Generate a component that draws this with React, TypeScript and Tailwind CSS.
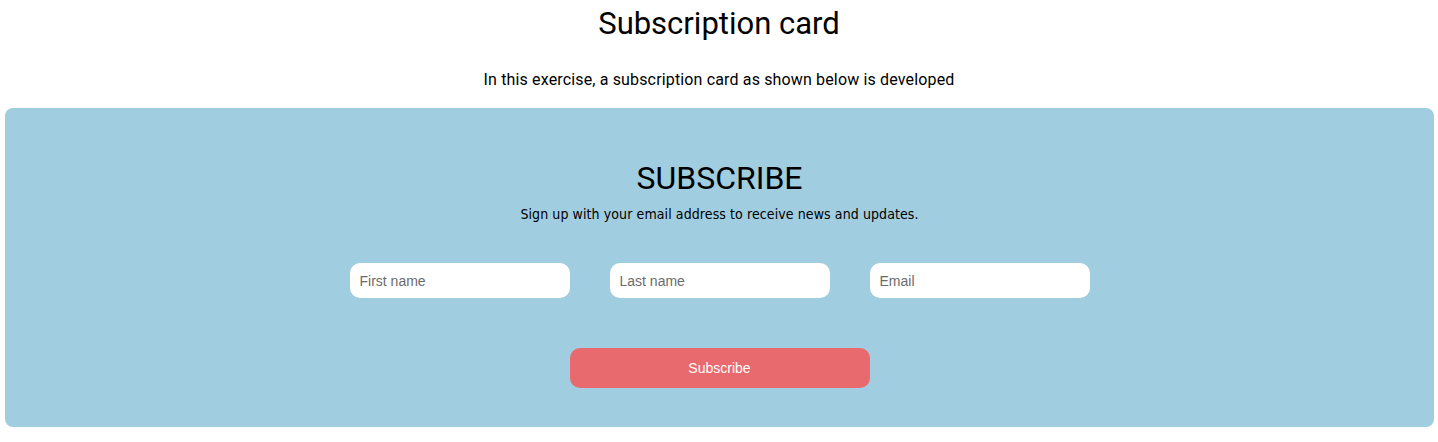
export default function App() {
  return (
    <div className="bg-white text-black font-['Roboto','Helvetica_Neue',Arial,sans-serif]">
      <h1 className="pt-[4px] text-center text-[31px] leading-[40px] font-normal">
        Subscription card
      </h1>
      <p className="mt-[26px] text-center text-[16px] leading-[20px] tracking-[0.15px]">
        In this exercise, a subscription card as shown below is developed
      </p>

      <div className="mt-[18px] ml-[5px] mr-[4px] rounded-[8px] bg-[#a0cddf] pt-[56px] pb-[39px]">
        <h2 className="text-center text-[32px] leading-[28px] font-normal">
          SUBSCRIBE
        </h2>
        <p className="mt-[14px] text-center text-[14px] leading-[16px] font-['DejaVu_Sans',Verdana,sans-serif] tracking-[0.1px] scale-x-[0.9]">
          Sign up with your email address to receive news and updates.
        </p>

        <div className="mt-[41px] flex justify-center gap-[40px]">
          <input
            type="text"
            placeholder="First name"
            className="h-[35px] w-[220px] rounded-[10px] bg-white px-[10px] text-[14px] font-['Liberation_Sans',Arial,sans-serif] outline-none placeholder:text-[#6b6b6b]"
          />
          <input
            type="text"
            placeholder="Last name"
            className="h-[35px] w-[220px] rounded-[10px] bg-white px-[10px] text-[14px] font-['Liberation_Sans',Arial,sans-serif] outline-none placeholder:text-[#6b6b6b]"
          />
          <input
            type="email"
            placeholder="Email"
            className="h-[35px] w-[220px] rounded-[10px] bg-white px-[10px] text-[14px] font-['Liberation_Sans',Arial,sans-serif] outline-none placeholder:text-[#6b6b6b]"
          />
        </div>

        <div className="mt-[50px] flex justify-center">
          <button className="h-[40px] w-[300px] rounded-[10px] bg-[#e86a6e] text-[14px] text-white font-['Liberation_Sans',Arial,sans-serif]">
            Subscribe
          </button>
        </div>
      </div>
    </div>
  );
}
